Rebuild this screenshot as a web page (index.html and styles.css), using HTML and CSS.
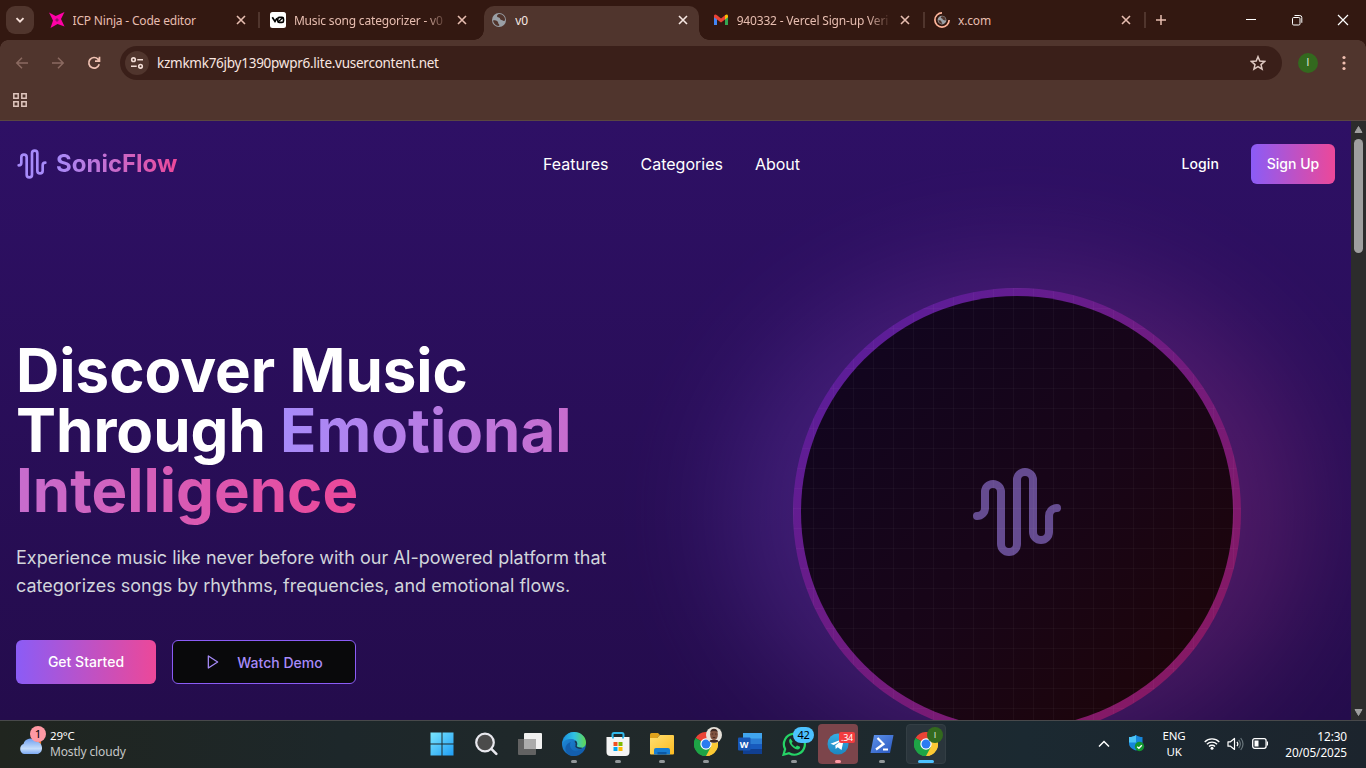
FILE: index.html
```html
<!DOCTYPE html>
<html lang="en">
<head>
<meta charset="utf-8">
<title>SonicFlow</title>
<link rel="stylesheet" href="styles.css">
</head>
<body>
<svg class="defs" width="0" height="0" aria-hidden="true">
  <defs>
    <linearGradient id="win" x1="0" y1="0" x2="1" y2="1"><stop offset="0" stop-color="#7be6fd"/><stop offset="1" stop-color="#1f9df5"/></linearGradient>
    <linearGradient id="edgeA" x1="0" y1="0" x2="1" y2="0"><stop offset="0" stop-color="#1a8fdc"/><stop offset=".5" stop-color="#2fc0e4"/><stop offset="1" stop-color="#62d84f"/></linearGradient>
    <linearGradient id="edgeB" x1="0" y1="0" x2="1" y2="1"><stop offset="0" stop-color="#2190df"/><stop offset="1" stop-color="#0f56a6"/></linearGradient>
    <linearGradient id="folder" x1="0" y1="0" x2="1" y2="1"><stop offset="0" stop-color="#ffdf72"/><stop offset="1" stop-color="#fdbb20"/></linearGradient>
    <linearGradient id="cloudy" x1="0" y1="0" x2="0" y2="1"><stop offset="0" stop-color="#6f9ff0"/><stop offset=".65" stop-color="#c5ddfb"/><stop offset="1" stop-color="#7ba9f2"/></linearGradient>
    <linearGradient id="tg" x1="0" y1="0" x2="0" y2="1"><stop offset="0" stop-color="#36ade3"/><stop offset="1" stop-color="#1c86c0"/></linearGradient>
    <linearGradient id="ps" x1="0" y1="0" x2="1" y2="1"><stop offset="0" stop-color="#5f93ea"/><stop offset="1" stop-color="#2857c0"/></linearGradient>
    <symbol id="close" viewBox="0 0 14 14"><path d="M3 3l8 8M11 3l-8 8" fill="none" stroke="currentColor" stroke-width="1.600"/></symbol>
    <symbol id="globe" viewBox="0 0 16 16"><circle cx="8" cy="8" r="7" fill="#9aa0a6"/><path d="M2 8.500c2.500-.7 5 .2 5.200 2.200-.2 1.300 1.300 1 1.200 2.800-1.300 1.500-5.600-.7-6.400-5zM7.800 2c-2.500 1.300-2.200 3 0 3.500 1.800.3.700 2 2.700 2.500 1.400.3 1.800 1.600 3.500.5C14.500 5 11.500 1.600 7.800 2z" fill="#50352d"/></symbol>
    <symbol id="wave" viewBox="0 0 24 24"><path d="M2 13a2 2 0 0 0 2-2V7a2 2 0 0 1 4 0v13a2 2 0 0 0 4 0V4a2 2 0 0 1 4 0v13a2 2 0 0 0 4 0v-4a2 2 0 0 1 2-2" fill="none" stroke="currentColor" stroke-width="2" stroke-linecap="round" stroke-linejoin="round"/></symbol>
    <symbol id="chrome" viewBox="0 0 24 24"><path d="M12 12L1.600 6A12 12 0 0 1 22.400 6z" fill="#ea4335"/><path d="M12 12L22.400 6A12 12 0 0 1 12 24z" fill="#fcc934"/><path d="M12 12v12A12 12 0 0 1 1.600 6z" fill="#1ea446"/><path d="M12 6.500h10.700A12 12 0 0 1 12 24l5-9z" fill="#fcc934"/><path d="M6.900 15L1.600 6A12 12 0 0 0 12 24l4.800-9z" fill="#1ea446"/><circle cx="12" cy="12" r="5.700" fill="#fff"/><circle cx="12" cy="12" r="4.500" fill="#2b7cf0"/></symbol>
  </defs>
</svg>

<div class="screen">
  <header class="browser">
    <div class="strip">
      <div class="tab-search"><svg width="12" height="12" viewBox="0 0 12 12"><path d="M2.500 4.200L6 7.700l3.500-3.500" fill="none" stroke="currentColor" stroke-width="1.900"/></svg></div>
      <div class="tab">
        <svg width="16" height="16" viewBox="0 0 16 16"><path d="M0 .5L6.700 4 15.500 0 12 7l3.500 7.500L8.500 12 1.500 16 4 8.500z" fill="#ff00a6"/><path d="M8 6l2 2-2 2-2-2z" fill="#97106a"/></svg>
        <span class="tab-title">ICP Ninja - Code editor</span><svg class="x"><use href="#close"/></svg>
      </div>
      <div class="tab sep">
        <svg width="16" height="16" viewBox="0 0 16 16"><rect width="16" height="16" rx="2.500" fill="#fff"/><path d="M2.300 5.300L5 9.500l2-3.200" fill="none" stroke="#000" stroke-width="1.700"/><rect x="7.800" y="5.400" width="5.700" height="5" rx="1.500" fill="none" stroke="#000" stroke-width="1.600"/><path d="M8 10l5-4.500" stroke="#000" stroke-width="1.300"/></svg>
        <span class="tab-title fade">Music song categorizer - v0</span><svg class="x"><use href="#close"/></svg>
      </div>
      <div class="tab active">
        <svg width="16" height="16"><use href="#globe"/></svg>
        <span class="tab-title">v0</span><svg class="x"><use href="#close"/></svg>
      </div>
      <div class="tab">
        <svg width="16" height="16" viewBox="0 0 16 16"><path d="M1 4v9h3V6z" fill="#4285f4"/><path d="M15 4v9h-3V6z" fill="#34a853"/><path d="M1 3.500C1.500 2 3 2.300 4 3.200L8 6.500l4-3.300v4.300l-4 3-4-3L1 5.200z" fill="#ea4335"/><path d="M12 3.200c1.500-1.400 3-.8 3 .8v1.200l-3 2.300z" fill="#fbbc04"/></svg>
        <span class="tab-title fade">940332 - Vercel Sign-up Veri</span><svg class="x"><use href="#close"/></svg>
      </div>
      <div class="tab sep">
        <svg width="16" height="16" viewBox="0 0 16 16"><use href="#globe" x="3" y="3" width="10" height="10"/><path d="M8 .9a7.100 7.100 0 1 0 7.100 7.100" fill="none" stroke="#ffb59b" stroke-width="1.700"/></svg>
        <span class="tab-title">x.com</span><svg class="x"><use href="#close"/></svg>
      </div>
      <div class="new-tab"><svg width="12" height="12" viewBox="0 0 12 12"><path d="M6 1v10M1 6h10" stroke="currentColor" stroke-width="1.500"/></svg></div>
      <div class="win-buttons">
        <svg width="12" height="12" viewBox="0 0 12 12"><path d="M1 5.500h10" stroke="#fff"/></svg>
        <svg width="12" height="12" viewBox="0 0 12 12"><rect x="1.500" y="3.500" width="7.500" height="7.500" rx="1.200" fill="none" stroke="#fff"/><path d="M3.500 1.500h5.300a2 2 0 0 1 2 2v5.300" fill="none" stroke="#fff"/></svg>
        <svg width="12" height="12" viewBox="0 0 12 12"><path d="M1 1l10 10M11 1L1 11" stroke="#fff" stroke-width="1.200"/></svg>
      </div>
    </div>
    <div class="toolbar">
      <svg class="nav dim" viewBox="0 0 16 16"><path d="M14 8H3M8 2.800L2.800 8 8 13.200" fill="none" stroke="currentColor" stroke-width="1.500"/></svg>
      <svg class="nav dim" viewBox="0 0 16 16"><path d="M2 8h11M8 2.800L13.200 8 8 13.200" fill="none" stroke="currentColor" stroke-width="1.500"/></svg>
      <svg class="nav" viewBox="0 0 16 16"><path d="M13.200 9.300A5.300 5.300 0 1 1 12 4.200L13 5.500M13.500 1.800v4.400H9" fill="none" stroke="currentColor" stroke-width="1.700"/></svg>
      <div class="omnibox">
        <span class="site"><svg width="14" height="14" viewBox="0 0 14 14" fill="none" stroke="currentColor" stroke-width="1.600"><circle cx="3.500" cy="3.700" r="1.800"/><path d="M7.300 3.700H13M1 10.300h5.700"/><circle cx="10.500" cy="10.300" r="1.800"/></svg></span>
        <span class="url">kzmkmk76jby1390pwpr6.lite.vusercontent.net</span>
        <svg width="16" height="16" viewBox="0 0 16 16"><path d="M8 1.700l1.800 4.400 4.700.4L11 9.600l1.100 4.600L8 11.700l-4.100 2.500L5 9.600 1.500 6.500l4.700-.4z" fill="none" stroke="#dfc9c2" stroke-width="1.500"/></svg>
      </div>
      <span class="avatar">I</span>
      <svg class="menu" width="4" height="16" viewBox="0 0 4 16" fill="#f0bfb0"><circle cx="2" cy="2.500" r="1.600"/><circle cx="2" cy="8" r="1.600"/><circle cx="2" cy="13.500" r="1.600"/></svg>
    </div>
    <div class="bookmarks"><svg width="14" height="14" viewBox="0 0 14 14" fill="none" stroke="#dfc5bd" stroke-width="1.500"><path d="M.8.8h4.400v4.400H.8zM8.800.8h4.400v4.400H8.800zM.8 8.800h4.400v4.400H.8zM8.800 8.800h4.400v4.400H8.800z"/></svg></div>
  </header>

  <div class="viewport">
    <div class="page">
      <nav class="site-nav">
        <div class="brand"><svg width="32" height="32"><use href="#wave"/></svg><span class="brand-name">SonicFlow</span></div>
        <div class="links"><span>Features</span><span>Categories</span><span>About</span></div>
        <div class="auth"><span class="login">Login</span><span class="signup">Sign Up</span></div>
      </nav>
      <main class="hero">
        <section class="copy">
          <h1>Discover Music<br>Through <span class="accent">Emotional<br>Intelligence</span></h1>
          <p>Experience music like never before with our AI-powered platform that categorizes songs by rhythms, frequencies, and emotional flows.</p>
          <div class="actions">
            <span class="primary">Get Started</span>
            <span class="demo"><svg width="16" height="16" viewBox="0 0 24 24"><path d="M5 3l14 9-14 9z" fill="none" stroke="currentColor" stroke-width="1.900" stroke-linejoin="round"/></svg>Watch Demo</span>
          </div>
        </section>
        <section class="visual">
          <div class="glow"></div>
          <div class="disc"><svg width="96" height="96"><use href="#wave"/></svg></div>
        </section>
      </main>
    </div>
    <div class="scrollbar">
      <svg width="11" height="9" viewBox="0 0 11 9"><path d="M5.500 1.500L9 7.500H2z" fill="#9f9f9f" stroke="#9f9f9f" stroke-linejoin="round"/></svg>
      <i class="thumb"></i>
      <svg class="down" width="11" height="9" viewBox="0 0 11 9"><path d="M5.500 7.500L9 1.500H2z" fill="#9f9f9f" stroke="#9f9f9f" stroke-linejoin="round"/></svg>
    </div>
  </div>

  <footer class="taskbar">
    <div class="weather">
      <div class="weather-icon"><svg width="26" height="18" viewBox="0 0 26 18"><path d="M17 6c2-6 7-3 6 1z" fill="#ee7418"/><path d="M6 17a5.300 5.300 0 0 1-.5-10A7 7 0 0 1 18 4.500 6.500 6.500 0 0 1 20 17z" fill="url(#cloudy)"/></svg><span class="alert">1</span></div>
      <div><div class="temp">29°C</div><div class="sky">Mostly cloudy</div></div>
    </div>
    <div class="apps">
      <div class="app"><svg width="24" height="24" viewBox="0 0 24 24" fill="url(#win)"><path d="M.5.500h11v11H.5zM12.500.5h11v11h-11zM.5 12.500h11v11H.5zM12.500 12.500h11v11h-11z"/></svg></div>
      <div class="app"><svg width="24" height="24" viewBox="0 0 24 24"><circle cx="11" cy="10.500" r="8.800" fill="#4b4b4b" stroke="#e8e8ee" stroke-width="2.200"/><path d="M17.300 16.800l5 5" stroke="#e8e8ee" stroke-width="2.600" stroke-linecap="round"/></svg></div>
      <div class="app"><svg width="24" height="24" viewBox="0 0 24 24"><rect x="6" y="1" width="18" height="16" rx="1" fill="#f1f1f1"/><path d="M0 7h18v15a1 1 0 0 1-1 1H1a1 1 0 0 1-1-1z" fill="#626262"/><path d="M6 7h12v10H6z" fill="#ababab"/></svg></div>
      <div class="app run"><svg width="24" height="24" viewBox="0 0 24 24"><circle cx="12" cy="12" r="12" fill="url(#edgeB)"/><path d="M1 9C3 3 7 0 12 0c7 0 12 5 12 10.500 0 5-5 6.500-8.500 5-1.500-.8-.2-1.800-.2-3.500 0-3-3-5-6.500-5S2 8 0 12z" fill="url(#edgeA)"/><path d="M8.800 10c-2.300 4.500 1.200 10.500 7.200 9 2-.5 4-1.200 5.800-2.200C19.500 21 16 24 11.500 24 5 24 1 17 5 12.500 6 11.300 7.500 10.400 8.800 10z" fill="#135fae"/><path d="M13 9.200c1.700 1.300 1.800 2.700 1.100 4.300-.8 1.700 2.900 3 5.500 2.500" fill="none" stroke="#183955" stroke-width="1.500"/></svg></div>
      <div class="app run"><svg width="24" height="24" viewBox="0 0 24 24"><path d="M6.500 6V2.500a1.500 1.500 0 0 1 1.500-1.500h8a1.500 1.500 0 0 1 1.500 1.500V6" fill="none" stroke="#32b8ea" stroke-width="2"/><path d="M.5 5h23v15a4 4 0 0 1-4 4h-15a4 4 0 0 1-4-4z" fill="#f4f4f4"/><path d="M6 5h2v1.500H6zM16 5h2v1.500h-2z" fill="#32b8ea"/><path d="M7.500 10h4v4h-4z" fill="#f25022"/><path d="M12.500 10h4v4h-4z" fill="#7fba00"/><path d="M7.500 15h4v4h-4z" fill="#00a4ef"/><path d="M12.500 15h4v4h-4z" fill="#ffb900"/></svg></div>
      <div class="app run"><svg width="24" height="24" viewBox="0 0 24 24"><path d="M0 6V2.500A1.500 1.500 0 0 1 1.500 1H8l2 2-3 3z" fill="#dfa21c"/><path d="M0 6h7l3-3h13a1 1 0 0 1 1 1v17.500a1 1 0 0 1-1 1H1a1 1 0 0 1-1-1z" fill="url(#folder)"/><path d="M4 22.500V18a2 2 0 0 1 2-2h12a2 2 0 0 1 2 2v4.500z" fill="#177dd2"/><path d="M7.500 22.500V20h9v2.500z" fill="#0c59a5"/></svg></div>
      <div class="app run"><svg width="24" height="24"><use href="#chrome"/></svg><svg class="photo" width="16" height="16" viewBox="0 0 16 16"><circle cx="8" cy="8" r="8" fill="#e6e1da"/><ellipse cx="8" cy="7.500" rx="3.900" ry="5.500" fill="#80523f"/><path d="M4.200 5c.5-4.500 7-4.500 7.600 0-2-1.500-5.500-1.500-7.600 0zM4.500 13h7l1 1.500c-3 1.700-6 1.700-9 0z" fill="#3f2924"/><path d="M5.700 7h1.500M9 7h1.500M6.800 10.500h2.500" stroke="#3a211a" stroke-width=".8"/></svg></div>
      <div class="app"><svg width="24" height="24" viewBox="0 0 24 24"><path d="M5 1h19v6H5z" fill="#41a5ee"/><path d="M5 6.500h19V12H5z" fill="#2b7cd3"/><path d="M5 12h19v5H5z" fill="#185abd"/><path d="M5 17h19v5H5z" fill="#103f91"/><rect y="5.500" width="12.500" height="13" rx="1" fill="#1856b4"/><text x="6.200" y="15.800" text-anchor="middle" class="word-w">W</text></svg></div>
      <div class="app run"><svg width="24" height="24" viewBox="0 0 24 24"><path d="M1.500 22.700l1.600-5.600A10.500 10.500 0 1 1 7 21.200z" fill="#1d2628" stroke="#25d366" stroke-width="2.200"/><path d="M8.500 6.500c-4 2 1.500 10.500 7 11 2 0 3-1.800 2.500-2.700l-3-1.400-1.400 1.500c-1.600-.5-3.400-2.200-4-3.800l1.100-1.300z" fill="#25d366"/></svg><span class="pill">42</span></div>
      <div class="app run attention"><svg width="22" height="22" viewBox="0 0 22 22"><circle cx="11" cy="11" r="10.500" fill="url(#tg)"/><path d="M3.500 10.800L17 5.500 14.500 17l-3.800-2.800-2 1.800-.4-3.500 5.700-4.500-7.200 4z" fill="#fff"/></svg><span class="red-badge">.34</span></div>
      <div class="app run"><svg width="24" height="20" viewBox="0 0 24 20"><path d="M4 1h19.500L20 19H.5z" fill="url(#ps)"/><path d="M7.500 4l6 6L6 15.500M13 15.500h5" fill="none" stroke="#fff" stroke-width="2.200"/></svg></div>
      <div class="app current"><svg width="24" height="24"><use href="#chrome"/></svg><span class="profile">I</span></div>
    </div>
    <div class="tray">
      <svg width="12" height="8" viewBox="0 0 12 8"><path d="M1 6.500l5-5 5 5" fill="none" stroke="#fff" stroke-width="1.500"/></svg>
      <svg class="shield" width="17" height="17" viewBox="0 0 17 17"><path d="M8 0c2 1.500 4 2 6.500 2v6c0 4-3 6-6.500 7.500C4 14 1 12 1 8V2C4 2 6 1.500 8 0z" fill="#1686da"/><path d="M8 0v7.500H1V2C4 2 6 1.500 8 0z" fill="#4cc4f5"/><circle cx="11.500" cy="11.500" r="4.700" fill="#12962f"/><path d="M9.200 11.700l1.700 1.600 2.900-3" fill="none" stroke="#fff" stroke-width="1.300"/></svg>
      <div class="lang">ENG<br>UK</div>
      <svg class="wifi" width="16" height="13" viewBox="0 0 16 13"><g fill="none" stroke="#fff" stroke-width="1.300"><path d="M.7 5a10.300 10.300 0 0 1 14.600 0M2.900 7.300a7.200 7.200 0 0 1 10.200 0M5 9.500a4.200 4.200 0 0 1 6 0"/></g><circle cx="8" cy="11.200" r="1.500" fill="#fff"/></svg>
      <svg class="sound" width="17" height="14" viewBox="0 0 17 14"><path d="M1 4.800h2.500L7.500 1.500v11L3.500 9.200H1z" fill="none" stroke="#fff" stroke-width="1.200" stroke-linejoin="round"/><path d="M10 4.800q1.700 2.200 0 4.400" fill="none" stroke="#fff" stroke-width="1.200"/><path d="M11.700 2.800q3.300 4.200 0 8.400M13.700 1q4.600 6 0 12" fill="none" stroke="#68757b" stroke-width="1.200"/></svg>
      <svg class="battery" width="17" height="11" viewBox="0 0 17 11"><rect x=".7" y=".7" width="13.400" height="9.600" rx="2" fill="none" stroke="#fff" stroke-width="1.300"/><rect x="2.500" y="2.500" width="4" height="6" fill="#fff"/><path d="M15 3.500h1v4h-1z" fill="#fff"/></svg>
      <div class="clock">12:30<br>20/05/2025</div>
    </div>
  </footer>
</div>
</body>
</html>
```
FILE: styles.css
```css
* { box-sizing: border-box; }
body { margin: 0; overflow: hidden; background: #331811; }
svg { display: block; flex: none; }
.defs { position: absolute; }
.screen { width: 1366px; height: 768px; display: flex; flex-direction: column; font-family: "Noto Sans", "Open Sans", sans-serif; }

/* Browser chrome */
.browser { height: 121px; background: #50352d; border-bottom: 1px solid #5a4741; flex: none; }
.strip { height: 40px; background: #331811; display: flex; padding-left: 6px; position: relative; }
.strip::before, .strip::after { content: ""; position: absolute; top: 40px; width: 8px; height: 8px; }
.strip::before { left: 0; background: radial-gradient(circle at 8px 8px, transparent 7.5px, #331811 8px); }
.strip::after { right: 0; background: radial-gradient(circle at 0 8px, transparent 7.5px, #331811 8px); }
.tab-search { width: 28px; height: 28px; margin: 6px 4px 0 0; border-radius: 9px; background: #50352d; color: #f5dfd8; display: flex; align-items: center; justify-content: center; }
.tab { width: 221.400px; height: 40px; padding: 0 0 0 10.500px; display: flex; align-items: center; gap: 8px; position: relative; color: #e7bdb0; }
.tab > * { position: relative; z-index: 1; }
.tab-title { width: 152px; overflow: hidden; white-space: nowrap; font-size: 12px; line-height: 18px; letter-spacing: -.18px; padding-top: 1px; }
.fade { mask-image: linear-gradient(90deg, #000 86%, transparent 102%); }
.x { width: 14px; height: 14px; margin-left: 1px; }
.sep::before { content: ""; position: absolute; left: -1px; top: 12px; width: 2px; height: 16px; background: #50352d; }
.active { color: #f7e8e3; }
.active::before { content: ""; position: absolute; left: 3px; right: 3px; top: 6px; bottom: 0; z-index: 0; border-radius: 10px 10px 0 0; background: #50352d; }
.active::after { content: ""; position: absolute; left: -7px; right: -7px; bottom: 0; height: 10px; z-index: 0; background: radial-gradient(circle at 0 0, transparent 9.500px, #50352d 10px) 0 0 / 10px 10px no-repeat, radial-gradient(circle at 100% 0, transparent 9.500px, #50352d 10px) 100% 0 / 10px 10px no-repeat; }
.new-tab { width: 30px; display: flex; align-items: center; justify-content: center; color: #e7bdb0; position: relative; left: 1px; }
.new-tab::before { content: ""; position: absolute; left: -2px; top: 12px; width: 2px; height: 16px; background: #50352d; }
.win-buttons { margin-left: auto; display: flex; align-items: center; gap: 34px; padding-right: 17px; }
.toolbar { height: 46px; display: flex; align-items: center; padding-left: 14px; }
.nav { width: 16px; height: 16px; margin-right: 20px; color: #efc1b2; }
.nav + .nav + .nav { margin-right: 18px; }
.dim { color: #8b6a61; }
.omnibox { width: 1162px; height: 34px; border-radius: 17px; background: #3a1f19; display: flex; align-items: center; padding: 0 16px 0 5px; }
.site { width: 24px; height: 24px; border-radius: 50%; background: #50352d; color: #f2ddd6; display: flex; align-items: center; justify-content: center; }
.url { flex: 1; margin-left: 8px; font-size: 13.500px; letter-spacing: -.26px; color: #f9e6e0; }
.avatar { width: 20px; height: 20px; border-radius: 50%; margin-left: 16px; background: #33691e; color: #e0eadb; font: 10px/20px "Liberation Sans", sans-serif; text-align: center; }
.menu { margin-left: 24px; }
.bookmarks { height: 34px; padding: 7px 13px; }

/* Page */
.viewport { height: 599px; display: flex; flex: none; }
.page { width: 1351px; height: 599px; overflow: hidden; background: linear-gradient(#2e1065 0, #240c4c 100%); color: #fff; font-family: Inter, sans-serif; }
.site-nav { height: 86px; padding: 0 16px; display: grid; grid-template-columns: 527px 1fr auto; align-items: center; position: relative; z-index: 1; }
.brand { display: flex; gap: 8px; color: #a78bfa; align-items: center; }
.brand-name { font-size: 24px; font-weight: 700; line-height: 32px; color: transparent; background: linear-gradient(90deg, #a78bfa, #ec4899); background-clip: text; }
.links { display: flex; gap: 32px; font-size: 16px; }
.auth { display: flex; align-items: center; gap: 32px; font-size: 14px; font-weight: 500; }
.login { line-height: 20px; margin-top: -1px; letter-spacing: .1px; }
.signup { height: 40px; width: 84px; border-radius: 6px; line-height: 40px; text-align: center; background: linear-gradient(90deg, #8b5cf6, #ec4899); }
.hero { display: grid; grid-template-columns: 667px 668px; padding-left: 16px; height: 610px; }
.copy { padding-top: 133px; }
h1 { margin: 0; font-size: 60px; line-height: 60px; font-weight: 700; white-space: nowrap; }
.accent { color: transparent; background: linear-gradient(90deg, #a78bfa, #ec4899); background-clip: text; }
.copy p { margin: 24px 0 0; width: 600px; font-size: 18px; line-height: 28px; color: #d1d5db; }
.actions { display: flex; gap: 16px; margin-top: 40px; font-size: 14px; font-weight: 500; }
.primary { width: 140px; height: 44px; border-radius: 6px; line-height: 44px; text-align: center; background: linear-gradient(90deg, #8b5cf6, #ec4899); }
.demo { width: 184px; height: 44px; border-radius: 6px; display: flex; align-items: center; justify-content: center; gap: 16px; background: #09090b; border: 1px solid #8b5cf6; color: #a78bfa; }
.visual { display: grid; grid-template-rows: 448px; place-items: center; padding-top: 81px; }
.visual > * { grid-area: 1 / 1; }
.glow { width: 576px; height: 488px; border-radius: 50%; background: linear-gradient(90deg, #8b5cf6, #ec4899); opacity: .22; filter: blur(60px); }
.disc { width: 448px; height: 448px; border-radius: 50%; position: relative; overflow: hidden; display: grid; place-items: center; color: #654b90; background: linear-gradient(135deg, #541ea3, #8e185a); }
.disc::before { content: ""; position: absolute; inset: 8px; border-radius: 50%; background: linear-gradient(135deg, #11051f 10%, #180517 55%, #1e0508 95%); }
.disc::after { content: ""; position: absolute; inset: 0; background: linear-gradient(#ffffff08 1px, transparent 1px) 0 0 / 20px 20px, linear-gradient(90deg, #ffffff08 1px, transparent 1px) 0 0 / 20px 20px; }
.disc svg { position: relative; }
.scrollbar { width: 15px; background: #2c2c2c; display: flex; flex-direction: column; align-items: center; padding: 4px 0 3px; }
.thumb { width: 9px; height: 114px; margin-top: 5px; border-radius: 5px; background: #9f9f9f; }
.down { margin-top: auto; }

/* Taskbar */
.taskbar { height: 48px; border-top: 1px solid #48494b; background: linear-gradient(90deg, #20251f 0, #1d272a 25%, #21292a 50%, #1b2931 75%, #1c242d 100%); display: grid; grid-template-columns: 420px 528px 1fr; color: #fff; font-size: 11.500px; line-height: 16px; letter-spacing: -.2px; }
.weather { display: flex; padding: 7px 0 0 18px; gap: 6px; }
.weather-icon { position: relative; padding-top: 9px; }
.alert { position: absolute; top: -2px; left: 12px; width: 16px; height: 16px; border-radius: 50%; background: #ff99a4; color: #000; text-align: center; }
.sky { color: #c5c7c7; font-size: 12px; letter-spacing: -.15px; }
.apps { display: flex; }
.app { width: 44px; height: 46px; position: relative; display: grid; place-items: center; }
.app > svg { z-index: 1; }
.run::after, .current::after { content: ""; position: absolute; z-index: 1; bottom: 4px; left: 19px; width: 6px; height: 3px; border-radius: 2px; background: #92979a; }
.current::after { left: 14px; width: 16px; background: #4cc2ff; }
.attention::before, .current::before { content: ""; position: absolute; inset: 3px 2px; border-radius: 4px; background: #7c454b; }
.current::before { background: #2a353c; border: 1px solid #333e44; }
.attention::after { background: #ff99a4; }
.app > .photo { position: absolute; left: 22px; top: 6px; z-index: 2; }
.pill, .red-badge, .profile { position: absolute; z-index: 2; text-align: center; }
.pill { left: 21px; top: 6px; width: 21px; height: 16px; border-radius: 8px; background: #4cc2ff; color: #000; line-height: 16px; font-size: 11px; }
.red-badge { left: 23px; top: 11px; width: 16px; height: 11px; border-radius: 2px; background: #f23c3f; font-size: 9px; line-height: 11px; }
.profile { left: 23px; top: 6px; width: 16px; height: 16px; border-radius: 50%; background: #33691e; color: #dbe8d3; font: 9px/16px "Liberation Sans", sans-serif; }
.word-w { font: 700 9px "Noto Sans", sans-serif; fill: #fff; letter-spacing: 0; }
.tray { display: flex; align-items: center; padding: 0 19px 2px 150px; }
.shield { margin-left: 18px; }
.lang { width: 30px; margin-left: 14px; text-align: center; }
.wifi { margin-left: 15px; }
.sound { margin-left: 7px; }
.battery { margin-left: 8px; }
.clock { margin-left: auto; text-align: right; font-size: 11.800px; letter-spacing: -.1px; }
```
